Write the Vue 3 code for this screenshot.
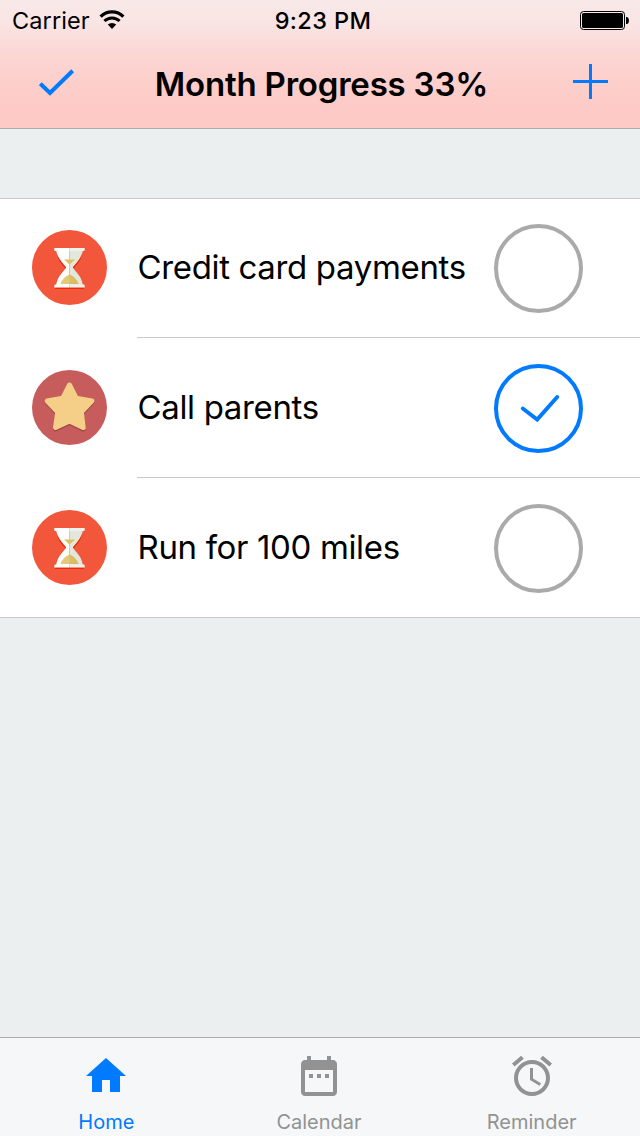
<script setup>
const goals = [
  { title: 'Credit card payments', icon: 'hourglass', done: false },
  { title: 'Call parents', icon: 'star', done: true },
  { title: 'Run for 100 miles', icon: 'hourglass', done: false },
]

const tabs = [
  { label: 'Home', active: true, path: 'M10 20v-6h4v6h5v-8h3L12 3 2 12h3v8z' },
  {
    label: 'Calendar',
    active: false,
    path: 'M9 11H7v2h2v-2zm4 0h-2v2h2v-2zm4 0h-2v2h2v-2zm2-7h-1V2h-2v2H8V2H6v2H5c-1.11 0-1.99.9-1.99 2L3 20c0 1.1.89 2 2 2h14c1.1 0 2-.9 2-2V6c0-1.1-.9-2-2-2zm0 16H5V9h14v11z',
  },
  {
    label: 'Reminder',
    active: false,
    path: 'M22 5.72l-4.6-3.86-1.29 1.53 4.6 3.86L22 5.72zM7.88 3.39L6.6 1.86 2 5.71l1.29 1.53 4.59-3.85zM12.5 8H11v6l4.75 2.85.75-1.23-4-2.37V8zM12 4c-4.97 0-9 4.03-9 9s4.02 9 9 9c4.97 0 9-4.03 9-9s-4.03-9-9-9zm0 16c-3.87 0-7-3.13-7-7s3.13-7 7-7 7 3.13 7 7-3.13 7-7 7z',
  },
]
</script>

<template>
  <div class="screen">
    <header class="header">
      <div class="status">
        <div class="network">
          <span class="carrier">Carrier</span>
          <svg class="wifi" width="26" height="20" viewBox="0 0 26 20">
            <path d="M1.600 6.600a16.200 16.200 0 0 1 22.800 0" fill="none" stroke="#000" stroke-width="3.200" />
            <path d="M5.400 11a10.900 10.900 0 0 1 15.200 0" fill="none" stroke="#000" stroke-width="3" />
            <path d="M8.800 14.600a6 6 0 0 1 8.400 0L13 19z" fill="#000" />
          </svg>
        </div>
        <span class="time">9:23 PM</span>
        <svg class="battery" width="50" height="20" viewBox="0 0 50 20">
          <rect x="0.5" y="1.5" width="44" height="18" rx="3" fill="#fbe9e7" stroke="#000" />
          <rect x="2" y="3" width="41" height="15" rx="1.5" fill="#000" />
          <path d="M46 7h1.200q1.800 1 1.800 3.500T47.200 14H46z" fill="#000" />
        </svg>
      </div>
      <nav class="nav">
        <svg class="nav-check" width="36" height="28" viewBox="0 0 36 28">
          <path d="M1.300 14.700 11 24 33.700 1.700" fill="none" stroke="#007aff" stroke-width="4" />
        </svg>
        <h1 class="title">Month Progress 33%</h1>
        <svg class="nav-add" width="35" height="35" viewBox="0 0 35 35">
          <path d="M0 17.500h35M17.500 0v35" stroke="#007aff" stroke-width="3" />
        </svg>
      </nav>
    </header>

    <main class="content">
      <ul class="goals">
        <li v-for="goal in goals" :key="goal.title" class="goal">
          <svg v-if="goal.icon === 'hourglass'" class="badge" width="75" height="75" viewBox="0 0 75 75">
            <circle cx="37.500" cy="37.500" r="37.500" fill="#f2563b" />
            <path d="M23 57.500h29v1.300H23z" fill="#f01f00" />
            <path d="M24.500 21C26 30 30 33 33.500 37.500 30 42 26 46 24.500 55h26C49 46 45 42 41.500 37.500 45 33 49 30 50.500 21z" fill="#f01f00" transform="translate(0 1)" />
            <path d="M24 20.500C26 29 31 33 34.200 37.500 31 42 25.500 46 24 55.500h13.500v-35z" fill="#fdfdfa" />
            <path d="M51 20.500C49 29 44 33 40.800 37.500 44 42 49.500 46 51 55.500H37.500v-35z" fill="#e4e7db" />
            <path d="M32 29.500h11l-5.500 5z" fill="#dcbf64" />
            <path d="M28.500 54q2-6.500 9-9.500 7 3 9 9.500z" fill="#e4c979" />
            <path d="M37.500 44.500q7 3 9 9.500h-9z" fill="#d9bd69" />
            <path d="M22.300 18h15.200v3H23.300q-1 0-1-1zM22.300 57.500v-2q0-1 1-1h14.200v3z" fill="#fff" />
            <path d="M37.500 18h15.200v2q0 1-1 1H37.500zM37.500 54.500h14.200q1 0 1 1v2H37.500z" fill="#eff1e8" />
          </svg>
          <svg v-else class="badge" width="75" height="75" viewBox="0 0 75 75">
            <circle cx="37.500" cy="37.500" r="37.500" fill="#c75c5c" />
            <g stroke-width="5" stroke-linejoin="round">
              <path d="M37.500 15.500 44.200 28.600 59.800 31.300 49.300 42.500 51.200 58 37.500 51.400 23.500 58 25.700 42.500 15.200 31.300 30.800 28.600z" fill="#9f4a4a" stroke="#9f4a4a" transform="translate(0 1)" />
              <path d="M37.500 15 44.200 28.100 59.800 31 49.300 42 51.200 57.500 37.500 50.900 23.500 57.500 25.700 42 15.200 31 30.800 28.100z" fill="#f5cf87" stroke="#f5cf87" />
            </g>
          </svg>
          <div class="goal-body">
            <span class="goal-title">{{ goal.title }}</span>
            <span class="toggle" :class="{ done: goal.done }">
              <svg v-if="goal.done" width="81" height="81" viewBox="0 0 81 81">
                <path d="M24.800 40.500 39.200 51.500 59.200 29" fill="none" stroke="#007aff" stroke-width="4" stroke-linecap="round" stroke-linejoin="miter" />
              </svg>
            </span>
          </div>
        </li>
      </ul>
    </main>

    <footer class="tabbar">
      <div v-for="tab in tabs" :key="tab.label" class="tab" :class="{ active: tab.active }">
        <svg width="48" height="48" viewBox="0 0 24 24"><path :d="tab.path" fill="currentColor" /></svg>
        <span>{{ tab.label }}</span>
      </div>
    </footer>
  </div>
</template>

<style>
body {
  margin: 0;
}
</style>

<style scoped>
.screen {
  display: flex;
  flex-direction: column;
  width: 640px;
  height: 1136px;
  overflow: hidden;
  box-sizing: border-box;
  background: #ebeff0;
  color: #000;
  font-family: Inter, "Liberation Sans", sans-serif;
}
.header {
  height: 128px;
  border-bottom: 1px solid #a9adae;
  background: linear-gradient(#f8e9e9 0, #f9e4e3 25px, #fbd6d3 55px, #fdcdc9 90px, #fec9c4 128px);
}
.status {
  display: grid;
  grid-template-columns: 1fr auto 1fr;
  align-items: center;
  height: 40px;
  padding: 0 10px 0 12px;
}
.network {
  display: flex;
  align-items: center;
  gap: 9px;
}
.carrier {
  font-size: 23.5px;
  letter-spacing: 0.1px;
}
.time {
  padding-left: 4px;
  font-size: 23.5px;
  font-weight: 500;
  letter-spacing: 0.4px;
}
.battery {
  justify-self: end;
}
.nav {
  display: grid;
  grid-template-columns: 1fr auto 1fr;
  align-items: center;
  height: 88px;
  padding: 0 32px 0 35px;
}
.title {
  margin: 0;
  font-size: 33px;
  font-weight: 600;
  letter-spacing: -0.2px;
  white-space: nowrap;
}
.nav-add {
  justify-self: end;
  margin-bottom: 5px;
}
.nav-check {
  margin-left: 4px;
  margin-bottom: 3px;
}
.content {
  flex: 1;
  padding-top: 69px;
}
.goals {
  margin: 0;
  padding: 0;
  list-style: none;
  background: #fff;
  box-shadow: inset 0 1px #c8c7cc;
}
.goal {
  display: flex;
  align-items: center;
  height: 140px;
  padding-left: 32px;
}
.badge {
  flex: none;
  margin-right: 30px;
  margin-top: -1px;
}
.goal-body {
  flex: 1;
  display: flex;
  align-items: center;
  justify-content: space-between;
  box-sizing: border-box;
  height: 140px;
  padding-right: 57px;
  border-bottom: 1px solid #c8c8c8;
}
.goal:last-child {
  border-bottom: 1px solid #c8c8c8;
  height: 139px;
}
.goal:last-child .goal-body {
  height: 139px;
  border-bottom: 0;
}
.goal-title {
  margin-bottom: 2px;
  padding-left: 0.5px;
  font-size: 33px;
  letter-spacing: -0.35px;
  white-space: nowrap;
}
.toggle {
  flex: none;
  box-sizing: border-box;
  width: 89px;
  height: 89px;
  margin-top: 1px;
  border: 4px solid #aaa;
  border-radius: 50%;
}
.toggle.done {
  border-color: #007aff;
}
.toggle svg {
  display: block;
}
.tabbar {
  display: flex;
  box-sizing: border-box;
  height: 99px;
  padding-right: 2px;
  border-top: 1px solid #a9adae;
  background: #f5f7f8;
}
.tab {
  flex: 1;
  display: flex;
  flex-direction: column;
  align-items: center;
  padding-top: 14px;
  color: #929292;
  font-size: 20px;
  line-height: 24px;
}
.tab span {
  margin-top: 10px;
}
.tab.active {
  color: #007aff;
}
</style>
